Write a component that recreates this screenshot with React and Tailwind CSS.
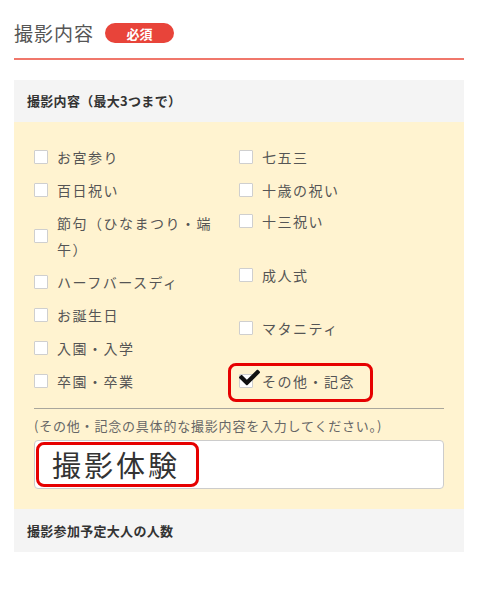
import React from 'react';
import { FaCheck } from 'react-icons/fa';

const leftItems = [
  { label: 'お宮参り', mt: 'mt-0' },
  { label: '百日祝い', mt: 'mt-[7px]' },
  { label: '節句（ひなまつり・端午）', mt: 'mt-[7px]' },
  { label: 'ハーフバースディ', mt: 'mt-[7px]' },
  { label: 'お誕生日', mt: 'mt-[7px]' },
  { label: '入園・入学', mt: 'mt-[7px]' },
  { label: '卒園・卒業', mt: 'mt-[7px]' },
];

const rightItems = [
  { label: '七五三', mt: 'mt-0' },
  { label: '十歳の祝い', mt: 'mt-[7px]' },
  { label: '十三祝い', mt: 'mt-[5px]' },
  { label: '成人式', mt: 'mt-[28px]' },
  { label: 'マタニティ', mt: 'mt-[27px]' },
  { label: 'その他・記念', mt: 'mt-[27px]', checked: true },
];

function Item({ label, mt, checked }) {
  return (
    <div className={`relative flex items-center gap-[9px] ${mt}`}>
      <span className="relative w-[14px] h-[14px] shrink-0 bg-white border border-[#cfcfcf] rounded-[1px]">
        {checked && (
          <FaCheck className="absolute left-[-1px] top-[-8px] text-[#111]" size={21} />
        )}
      </span>
      <span className="max-w-[160px] text-[14px] leading-[26px] tracking-[1.5px] text-[#555]">{label}</span>
      {checked && (
        <div className="absolute left-[-11px] top-[-5px] w-[145px] h-[39px] border-[3px] border-[#e60000] rounded-[8px]" />
      )}
    </div>
  );
}

export default function App() {
  return (
    <div className="w-[480px] h-[600px] bg-white font-['Noto_Sans_CJK_JP',sans-serif] text-[#555]">
      <div className="pl-[14px] pr-[16px] pt-[20px]">
        <div className="flex items-center h-[26px] gap-[11px]">
          <span className="text-[19px] leading-[26px] tracking-[1px] text-[#555]">撮影内容</span>
          <span className="flex items-center justify-center w-[69px] h-[20px] rounded-full bg-[#e8443a] text-white text-[13px] font-bold leading-none">
            必須
          </span>
        </div>
        <div className="mt-[12px] h-[2px] bg-[#f0776b]" />

        <div className="mt-[20px] h-[42px] bg-[#f4f4f4] pl-[13px] flex items-center">
          <span className="text-[13px] font-bold text-[#333] tracking-[0.3px]">撮影内容（最大3つまで）</span>
        </div>

        <div className="bg-[#fff3d0] px-[20px] pt-[22px] pb-[20px]">
          <div className="grid grid-cols-2">
            <div className="flex flex-col">
              {leftItems.map((it) => (
                <Item key={it.label} {...it} />
              ))}
            </div>
            <div className="flex flex-col">
              {rightItems.map((it) => (
                <Item key={it.label} {...it} />
              ))}
            </div>
          </div>

          <div className="mt-[14px] h-[1px] bg-[#a9a69c]" />
          <p className="mt-[6px] text-[13px] leading-[22px] tracking-[0.8px] text-[#666]">
            (その他・記念の具体的な撮影内容を入力してください。)
          </p>
          <div className="relative mt-[3px] h-[49px] bg-white border border-[#cccccc] rounded-[4px] flex items-center pl-[17px]">
            <span className="text-[29px] leading-none tracking-[3px] text-[#333]">撮影体験</span>
            <div className="absolute left-[1px] top-[1px] w-[163px] h-[45px] border-[3px] border-[#e60000] rounded-[8px]" />
          </div>
        </div>

        <div className="h-[43px] bg-[#f4f4f4] pl-[13px] flex items-center">
          <span className="text-[13px] font-bold text-[#333] tracking-[0.3px]">撮影参加予定大人の人数</span>
        </div>
      </div>
    </div>
  );
}
